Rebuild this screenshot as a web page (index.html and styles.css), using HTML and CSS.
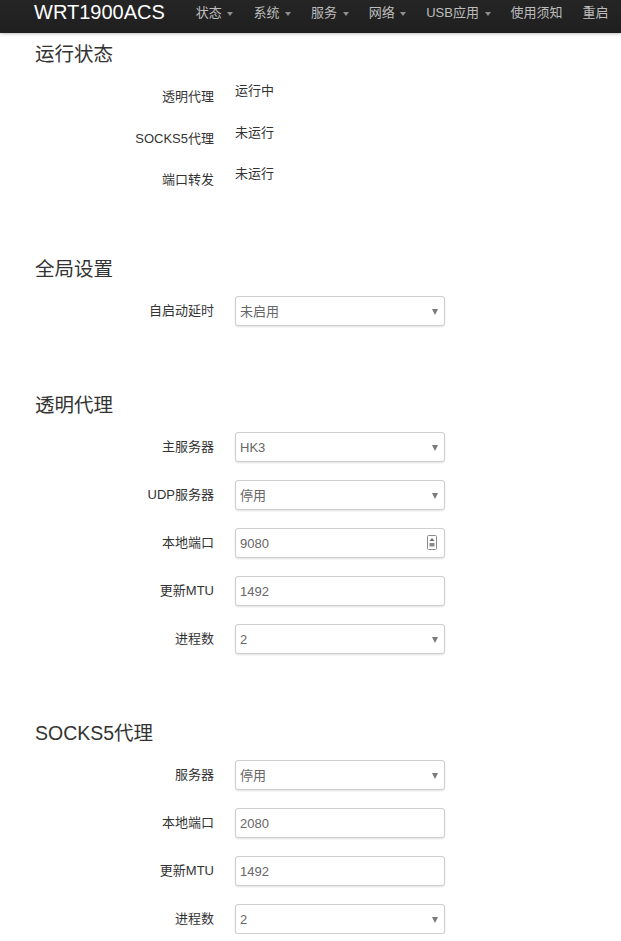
FILE: index.html
```html
<!DOCTYPE html>
<html lang="zh-CN">
<head>
<meta charset="utf-8">
<title>WRT1900ACS</title>
<link rel="stylesheet" href="styles.css">
</head>
<body>
<header class="navbar">
  <a class="brand" href="#">WRT1900ACS</a>
  <nav class="nav">
    <a class="nav-item" href="#">状态<span class="caret"></span></a>
    <a class="nav-item" href="#">系统<span class="caret"></span></a>
    <a class="nav-item" href="#">服务<span class="caret"></span></a>
    <a class="nav-item" href="#">网络<span class="caret"></span></a>
    <a class="nav-item" href="#">USB应用<span class="caret"></span></a>
    <a class="nav-item" href="#">使用须知</a>
    <a class="nav-item" href="#">重启</a>
  </nav>
</header>

<main class="content">
  <section class="section section-status">
    <h2 class="section-title">运行状态</h2>
    <div class="rows rows-status">
      <div class="status-row"><div class="label">透明代理</div><div class="value">运行中</div></div>
      <div class="status-row"><div class="label">SOCKS5代理</div><div class="value">未运行</div></div>
      <div class="status-row"><div class="label">端口转发</div><div class="value">未运行</div></div>
    </div>
  </section>

  <section class="section">
    <h2 class="section-title">全局设置</h2>
    <div class="rows">
      <div class="form-row">
        <label class="label">自启动延时</label>
        <div class="field select"><span class="field-text">未启用</span><span class="arrow"></span></div>
      </div>
    </div>
  </section>

  <section class="section">
    <h2 class="section-title">透明代理</h2>
    <div class="rows">
      <div class="form-row">
        <label class="label">主服务器</label>
        <div class="field select"><span class="field-text">HK3</span><span class="arrow"></span></div>
      </div>
      <div class="form-row">
        <label class="label">UDP服务器</label>
        <div class="field select"><span class="field-text">停用</span><span class="arrow"></span></div>
      </div>
      <div class="form-row">
        <label class="label">本地端口</label>
        <div class="field"><span class="field-text">9080</span>
          <svg class="spin" width="10" height="15" viewBox="0 0 10 15">
            <rect x="0.5" y="0.5" width="9" height="14" rx="1" fill="#fff" stroke="#8a8a8a"/>
            <path d="M5 3 L7.5 6 L2.5 6 Z" fill="#6a6a6a"/>
            <rect x="2.5" y="8" width="5" height="3.5" fill="#8a8a8a"/>
          </svg>
        </div>
      </div>
      <div class="form-row">
        <label class="label">更新MTU</label>
        <div class="field"><span class="field-text">1492</span></div>
      </div>
      <div class="form-row">
        <label class="label">进程数</label>
        <div class="field select"><span class="field-text">2</span><span class="arrow"></span></div>
      </div>
    </div>
  </section>

  <section class="section">
    <h2 class="section-title">SOCKS5代理</h2>
    <div class="rows">
      <div class="form-row">
        <label class="label">服务器</label>
        <div class="field select"><span class="field-text">停用</span><span class="arrow"></span></div>
      </div>
      <div class="form-row">
        <label class="label">本地端口</label>
        <div class="field"><span class="field-text">2080</span></div>
      </div>
      <div class="form-row">
        <label class="label">更新MTU</label>
        <div class="field"><span class="field-text">1492</span></div>
      </div>
      <div class="form-row">
        <label class="label">进程数</label>
        <div class="field select"><span class="field-text">2</span><span class="arrow"></span></div>
      </div>
    </div>
  </section>
</main>
</body>
</html>
```

FILE: styles.css
```css
html, body {
  margin: 0;
  padding: 0;
  background: #fff;
}

body {
  font-family: "Liberation Sans", "Noto Sans CJK SC", Arial, sans-serif;
  font-size: 13px;
  color: #333;
}

.navbar {
  height: 33px;
  background: linear-gradient(#252525, #1f1f1f);
  box-shadow: 0 1px 3px rgba(0, 0, 0, 0.25);
  display: flex;
  align-items: flex-start;
  padding-left: 34px;
  overflow: hidden;
  white-space: nowrap;
}

.brand {
  color: #fff;
  text-decoration: none;
  font-size: 20px;
  line-height: 24px;
  margin-right: 31px;
}

.nav {
  display: flex;
  gap: 20px;
  padding-top: 5px;
}

.nav-item {
  color: #bdbdbd;
  text-decoration: none;
  font-size: 13px;
  line-height: 16px;
  display: flex;
  align-items: center;
}

.caret {
  display: inline-block;
  width: 0;
  height: 0;
  margin-left: 5.6px;
  margin-top: 1px;
  border-left: 3.5px solid transparent;
  border-right: 3.5px solid transparent;
  border-top: 4px solid #8f8f8f;
}

.content {
  padding-left: 35px;
  padding-top: 9px;
}

.section-title {
  margin: 0;
  font-weight: normal;
  font-size: 19.5px;
  line-height: 24px;
  color: #333;
}

.section + .section {
  margin-top: 67px;
}

.section-status + .section {
  margin-top: 62px;
}

.rows {
  margin-top: 15px;
  display: flex;
  flex-direction: column;
  gap: 18px;
}

.rows-status {
  margin-top: 16px;
  gap: 11.5px;
}

.label {
  width: 179px;
  margin-right: 21px;
  text-align: right;
  line-height: 16px;
  color: #333;
  flex: none;
}

.status-row {
  display: flex;
  align-items: flex-start;
  height: 30px;
}

.status-row .label {
  padding-top: 7px;
}

.status-row .value {
  padding-top: 1px;
  line-height: 16px;
  color: #333;
}

.form-row {
  display: flex;
  align-items: center;
  height: 30px;
}

.field {
  position: relative;
  box-sizing: border-box;
  width: 210px;
  height: 30px;
  border: 1px solid #cfcfcf;
  border-radius: 3px;
  background: #fff;
  box-shadow: 0 1px 2px rgba(0, 0, 0, 0.12);
  display: flex;
  align-items: center;
  padding: 2px 0 0 4px;
  color: #666;
}

.field-text {
  line-height: 16px;
}

.arrow {
  position: absolute;
  right: 6px;
  top: 12px;
  width: 0;
  height: 0;
  border-left: 3.5px solid transparent;
  border-right: 3.5px solid transparent;
  border-top: 6px solid #7a7a7a;
}

.spin {
  position: absolute;
  right: 7px;
  top: 6px;
}
```
